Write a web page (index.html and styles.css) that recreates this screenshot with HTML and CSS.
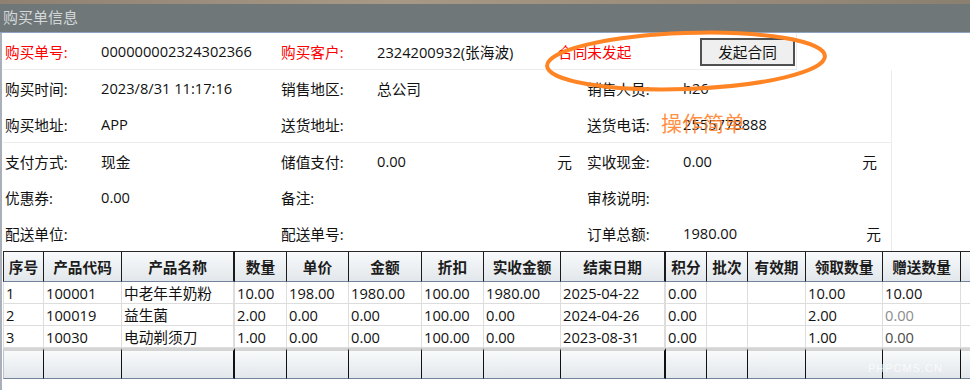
FILE: index.html
```html
<!DOCTYPE html>
<html lang="zh-CN">
<head>
    <meta charset="UTF-8">
    <meta name="viewport" content="width=device-width, initial-scale=1.0">
    <title>购买单信息</title>
    <link rel="stylesheet" href="styles.css">
</head>
<body>
    <div class="top-strip"></div>
    <header class="title-bar">购买单信息</header>

    <main class="content">
        <section class="head-row">
            <span class="cell label red">购买单号:</span>
            <span class="cell value">000000002324302366</span>
            <span class="cell label red">购买客户:</span>
            <span class="cell value wide">2324200932(张海波)</span>
            <span class="cell status red">合同未发起</span>
            <button type="button" class="start-btn">发起合同</button>
        </section>

        <section class="info">
            <div class="group">
                <div class="row">
                    <span class="cell label">购买时间:</span>
                    <span class="cell value">2023/8/31 11:17:16</span>
                    <span class="cell label">销售地区:</span>
                    <span class="cell value mid">总公司</span>
                    <span class="cell label">销售人员:</span>
                    <span class="cell value last">h26</span>
                </div>
                <div class="row">
                    <span class="cell label">购买地址:</span>
                    <span class="cell value">APP</span>
                    <span class="cell label">送货地址:</span>
                    <span class="cell value mid"></span>
                    <span class="cell label">送货电话:</span>
                    <span class="cell value last">2555778888</span>
                </div>
            </div>
            <div class="group">
                <div class="row">
                    <span class="cell label">支付方式:</span>
                    <span class="cell value">现金</span>
                    <span class="cell label">储值支付:</span>
                    <span class="cell value mid"><span>0.00</span><span>元</span></span>
                    <span class="cell label">实收现金:</span>
                    <span class="cell value last"><span>0.00</span><span>元</span></span>
                </div>
                <div class="row">
                    <span class="cell label">优惠券:</span>
                    <span class="cell value">0.00</span>
                    <span class="cell label">备注:</span>
                    <span class="cell value mid"></span>
                    <span class="cell label">审核说明:</span>
                    <span class="cell value last"></span>
                </div>
                <div class="row">
                    <span class="cell label">配送单位:</span>
                    <span class="cell value"></span>
                    <span class="cell label">配送单号:</span>
                    <span class="cell value mid"></span>
                    <span class="cell label">订单总额:</span>
                    <span class="cell value last total"><span>1980.00</span><span>元</span></span>
                </div>
            </div>
        </section>

        <table class="grid">
            <colgroup>
                <col style="width:41px"><col style="width:78px"><col style="width:113px">
                <col style="width:52px"><col style="width:62px"><col style="width:73px">
                <col style="width:62px"><col style="width:77px"><col style="width:105px">
                <col style="width:41px"><col style="width:41px"><col style="width:58px">
                <col style="width:77px"><col style="width:78px"><col>
            </colgroup>
            <thead>
                <tr>
                    <th>序号</th><th>产品代码</th><th class="thick">产品名称</th>
                    <th>数量</th><th>单价</th><th>金额</th><th>折扣</th><th>实收金额</th>
                    <th class="thick">结束日期</th><th>积分</th><th>批次</th><th>有效期</th>
                    <th>领取数量</th><th>赠送数量</th><th class="end"></th>
                </tr>
            </thead>
            <tbody>
                <tr>
                    <td>1</td><td>100001</td><td class="thick">中老年羊奶粉</td>
                    <td>10.00</td><td>198.00</td><td>1980.00</td><td>100.00</td><td>1980.00</td>
                    <td class="thick">2025-04-22</td><td>0.00</td><td></td><td></td>
                    <td>10.00</td><td>10.00</td><td class="end"></td>
                </tr>
                <tr>
                    <td>2</td><td>100019</td><td class="thick">益生菌</td>
                    <td>2.00</td><td>0.00</td><td>0.00</td><td>100.00</td><td>0.00</td>
                    <td class="thick">2024-04-26</td><td>0.00</td><td></td><td></td>
                    <td>2.00</td><td class="faded">0.00</td><td class="end"></td>
                </tr>
                <tr>
                    <td>3</td><td>10030</td><td class="thick">电动剃须刀</td>
                    <td>1.00</td><td>0.00</td><td>0.00</td><td>100.00</td><td>0.00</td>
                    <td class="thick">2023-08-31</td><td>0.00</td><td></td><td></td>
                    <td>1.00</td><td class="dim">0.00</td><td class="end"></td>
                </tr>
            </tbody>
            <tfoot>
                <tr>
                    <td></td><td></td><td class="thick"></td><td></td><td></td><td></td><td></td><td></td>
                    <td class="thick"></td><td></td><td></td><td></td><td></td><td></td><td class="end"></td>
                </tr>
            </tfoot>
        </table>
    </main>

    <!-- annotation drawn over the screenshot -->
    <svg class="mark" width="300" height="70" viewBox="0 0 300 70">
        <ellipse cx="141" cy="32" rx="139" ry="28" fill="none" stroke="#ff8424" stroke-width="4" transform="rotate(-2 141 32)"/>
    </svg>
    <div class="note">操作简单</div>
    <div class="watermark">PHPCMS.CN</div>
</body>
</html>
```

FILE: styles.css
```css
body {
    margin: 0;
    font-family: 'Open Sans', 'Noto Sans CJK SC', sans-serif;
    font-size: 14.67px;
    color: #111;
    background-color: #fff;
    position: relative;
    height: 390px;
    overflow: hidden;
}

.top-strip {
    height: 4px;
    background: linear-gradient(90deg, #8e8171, #a89986 40%, #9c8d7b 70%, #8a8070);
}

.title-bar {
    height: 28px;
    line-height: 27px;
    padding-left: 3px;
    background-color: #6f7779;
    color: #d3d7da;
    font-size: 15px;
    border-bottom: 1px solid #8ea2c2;
}

.content {
    border-left: 2px solid #aab0b9;
    padding-left: 1px;
    height: 357px;
}

.head-row {
    width: 793px;
    height: 36px;
    display: flex;
    align-items: center;
    border-right: 1px solid #ececec;
    border-bottom: 1px solid #ececec;
}

.cell {
    display: flex;
    align-items: center;
    white-space: nowrap;
    box-sizing: border-box;
}

.label {
    width: 96px;
}

.cell:first-child {
    width: 98px;
    padding-left: 2px;
}

.value {
    width: 180px;
}

.value.wide {
    width: 181px;
}

.red {
    color: #ff0000;
}

.status {
    width: 142px;
}

.start-btn {
    width: 95px;
    height: 28px;
    margin-top: 1px;
    border: 2px solid #505050;
    background-color: #efefef;
    font-family: inherit;
    font-size: 14.67px;
    color: #111;
    padding: 0;
}

.info {
    width: 888px;
    border-right: 1px solid #ececec;
}

.group:first-child {
    border-bottom: 1px solid #ececec;
}

.row {
    display: flex;
    height: 36px;
}

.value.mid {
    width: 210px;
    padding-right: 15px;
    justify-content: space-between;
}

.value.last {
    width: 208px;
    padding-right: 14px;
    justify-content: space-between;
}

.value.last.total {
    padding-right: 10px;
}

.grid {
    table-layout: fixed;
    width: 967px;
    border-collapse: separate;
    border-spacing: 0;
    font-size: 14.67px;
}

.grid th,
.grid td {
    padding: 0 0 0 2px;
    white-space: nowrap;
    overflow: hidden;
    text-align: left;
}

.grid th {
    height: 29px;
    text-align: center;
    font-weight: bold;
    color: #1c1c1c;
    background: linear-gradient(#f8fafb, #e2e7eb);
    border-top: 1px solid #2a2a2a;
    border-right: 1px solid #1a1a1a;
    border-bottom: 1px solid #72839b;
    padding: 0;
}

.grid th:first-child {
    border-left: 1px solid #2a2a2a;
}

.grid th.thick {
    border-right-width: 2px;
}

.grid tbody td {
    height: 21px;
    border-right: 1px solid #dddddd;
    border-bottom: 1px solid #dddddd;
}

.grid tbody td:first-child {
    border-left: 1px solid #dddddd;
}

.grid tbody td.thick {
    border-right: 2px solid #dddddd;
}

.grid td.faded {
    color: #8c8c8c;
}

.grid td.dim {
    color: #4a4a4a;
}

.grid tfoot td {
    height: 27px;
    background: linear-gradient(#f8fafb, #e2e7eb);
    border-top: 3px solid #d4d4d4;
    border-right: 1px solid #111;
    border-bottom: 1px solid #72839b;
}

.grid tfoot td:first-child {
    border-left: 1px solid #bcc3cc;
}

.grid tfoot td.thick {
    border-right-width: 2px;
}

.grid th.end,
.grid td.end {
    border-right: none;
}

.mark {
    position: absolute;
    left: 545px;
    top: 29px;
}

.note {
    position: absolute;
    left: 661px;
    top: 108px;
    font-family: 'Noto Sans CJK SC', sans-serif;
    font-size: 21px;
    line-height: 28px;
    color: rgba(255, 128, 40, 0.88);
}

.watermark {
    position: absolute;
    left: 868px;
    top: 362px;
    font-family: 'Liberation Sans', sans-serif;
    font-size: 11px;
    letter-spacing: 1px;
    color: rgba(255, 255, 255, 0.7);
}
```
